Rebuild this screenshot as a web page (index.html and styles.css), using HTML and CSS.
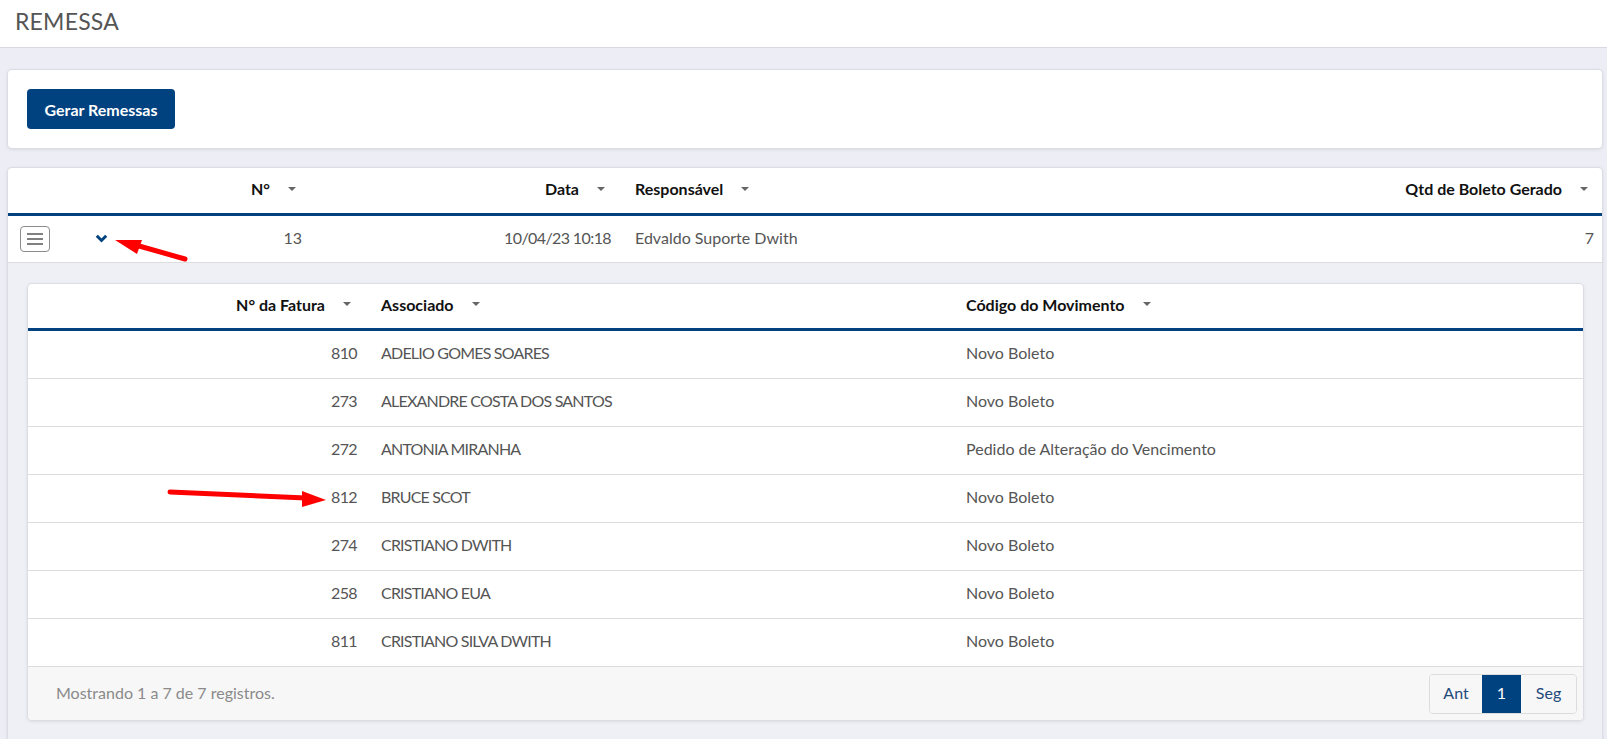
FILE: index.html
```html
<!DOCTYPE html>
<html lang="pt-BR">
<head>
    <meta charset="UTF-8">
    <title>Remessa</title>
    <meta name="viewport" content="width=device-width, initial-scale=1.0">
    <link rel="stylesheet" href="styles.css">
</head>
<body>
    <header class="page-header">
        <h1>REMESSA</h1>
    </header>

    <main class="page-content">
        <!-- Ações -->
        <section class="card actions-card">
            <button class="btn-primary">Gerar Remessas</button>
        </section>

        <!-- Lista de remessas -->
        <section class="card grid-card">
            <div class="grid-row remessa-cols grid-head">
                <div class="th"></div>
                <div class="th"></div>
                <div class="th right"><span>N°</span><i class="sort"></i></div>
                <div class="th right"><span>Data</span><i class="sort"></i></div>
                <div class="th left wide-pad"><span>Responsável</span><i class="sort"></i></div>
                <div class="th right"><span>Qtd de Boleto Gerado</span><i class="sort"></i></div>
            </div>

            <div class="grid-row remessa-cols grid-line">
                <div class="td menu-cell">
                    <span class="menu-btn"><span></span><span></span><span></span></span>
                </div>
                <div class="td expand-cell">
                    <svg class="chevron" width="13" height="9" viewBox="0 0 13 9">
                        <path d="M1.8 1.8 L6.5 6.5 L11.2 1.8" fill="none" stroke="#00417f" stroke-width="3"/>
                    </svg>
                </div>
                <div class="td right">13</div>
                <div class="td right num">10/04/23 10:18</div>
                <div class="td left wide-pad">Edvaldo Suporte Dwith</div>
                <div class="td right">7</div>
            </div>

            <!-- Detalhe expandido -->
            <div class="detail-area">
                <div class="card detail-card">
                    <div class="grid-row fatura-cols grid-head small-head">
                        <div class="th right"><span>N° da Fatura</span><i class="sort"></i></div>
                        <div class="th left wide-pad"><span>Associado</span><i class="sort"></i></div>
                        <div class="th left"><span>Código do Movimento</span><i class="sort"></i></div>
                    </div>

                    <div class="grid-row fatura-cols grid-line tall">
                        <div class="td right num">810</div>
                        <div class="td left wide-pad name">ADELIO GOMES SOARES</div>
                        <div class="td left">Novo Boleto</div>
                    </div>
                    <div class="grid-row fatura-cols grid-line tall">
                        <div class="td right num">273</div>
                        <div class="td left wide-pad name">ALEXANDRE COSTA DOS SANTOS</div>
                        <div class="td left">Novo Boleto</div>
                    </div>
                    <div class="grid-row fatura-cols grid-line tall">
                        <div class="td right num">272</div>
                        <div class="td left wide-pad name">ANTONIA MIRANHA</div>
                        <div class="td left">Pedido de Alteração do Vencimento</div>
                    </div>
                    <div class="grid-row fatura-cols grid-line tall">
                        <div class="td right num">812</div>
                        <div class="td left wide-pad name">BRUCE SCOT</div>
                        <div class="td left">Novo Boleto</div>
                    </div>
                    <div class="grid-row fatura-cols grid-line tall">
                        <div class="td right num">274</div>
                        <div class="td left wide-pad name">CRISTIANO DWITH</div>
                        <div class="td left">Novo Boleto</div>
                    </div>
                    <div class="grid-row fatura-cols grid-line tall">
                        <div class="td right num">258</div>
                        <div class="td left wide-pad name">CRISTIANO EUA</div>
                        <div class="td left">Novo Boleto</div>
                    </div>
                    <div class="grid-row fatura-cols grid-line tall">
                        <div class="td right num">811</div>
                        <div class="td left wide-pad name">CRISTIANO SILVA DWITH</div>
                        <div class="td left">Novo Boleto</div>
                    </div>

                    <div class="grid-footer">
                        <span class="grid-info">Mostrando 1 a 7 de 7 registros.</span>
                        <nav class="pager">
                            <span class="page-item">Ant</span>
                            <span class="page-item active">1</span>
                            <span class="page-item">Seg</span>
                        </nav>
                    </div>
                </div>
            </div>
        </section>
    </main>

    <!-- Setas de anotação -->
    <svg class="annotations" width="1607" height="739" viewBox="0 0 1607 739">
        <line x1="185" y1="259" x2="132" y2="244" stroke="#ff0000" stroke-width="5" stroke-linecap="round"/>
        <polygon points="115,240 142,240 137,254" fill="#ff0000"/>
        <line x1="170" y1="492" x2="306" y2="498" stroke="#ff0000" stroke-width="5" stroke-linecap="round"/>
        <polygon points="326,500 302,491 302,507" fill="#ff0000"/>
    </svg>
</body>
</html>
```

FILE: styles.css
```css
:root {
    --page-bg: #ededf6;
    --primary: #00417f;
    --text-color: #555555;
    --head-color: #111111;
    --line-color: #dddddd;
}

* {
    margin: 0;
    padding: 0;
    box-sizing: border-box;
}

body {
    background-color: var(--page-bg);
    font-family: 'Lato', 'Liberation Sans', sans-serif;
    font-size: 16px;
    color: var(--text-color);
    overflow: hidden;
}

.page-header {
    height: 48px;
    background: #ffffff;
    border-bottom: 1px solid #d9d9e2;
    padding-left: 15px;
    display: flex;
    align-items: center;
}

.page-header h1 {
    font-size: 23px;
    font-weight: 400;
    color: #555555;
    letter-spacing: 0.2px;
    margin-top: -5px;
}

.page-content {
    padding: 22px 5px 0 8px;
    display: flex;
    flex-direction: column;
    gap: 20px;
}

.card {
    background: #ffffff;
    border-radius: 4px;
    box-shadow: 0 0 0 1px #dcdce5, 0 1px 4px rgba(0, 0, 0, 0.12);
}

.actions-card {
    padding: 19px;
}

.btn-primary {
    height: 40px;
    width: 148px;
    background-color: var(--primary);
    color: #ffffff;
    border: none;
    border-radius: 4px;
    font-family: inherit;
    font-size: 16px;
    font-weight: 700;
    cursor: pointer;
}

/* Tabelas */
.grid-card {
    overflow: hidden;
}

.grid-row {
    display: grid;
    align-items: center;
}

.remessa-cols {
    grid-template-columns: 72px 44px 186px 309px 1fr 352px;
}

.fatura-cols {
    grid-template-columns: 337px 593px 1fr;
}

.grid-head {
    height: 48px;
    border-bottom: 3px solid var(--primary);
    color: var(--head-color);
    font-weight: 700;
}

.small-head {
    height: 47px;
}

.grid-line {
    height: 47px;
    border-bottom: 1px solid var(--line-color);
}

.grid-line.tall {
    height: 48px;
}

.th, .td {
    padding: 0 8px 4px;
    white-space: nowrap;
}

.th {
    display: flex;
    align-items: center;
}

.th.right {
    justify-content: flex-end;
}

.td.right {
    text-align: right;
}

.wide-pad {
    padding-left: 16px;
}

.num {
    letter-spacing: -0.6px;
}

.name {
    letter-spacing: -0.8px;
}

.sort {
    width: 0;
    height: 0;
    border-left: 4px solid transparent;
    border-right: 4px solid transparent;
    border-top: 4px solid #666666;
    margin-left: 18px;
    margin-right: 6px;
}

.menu-cell {
    padding: 0 0 0 12px;
}

.menu-btn {
    width: 30px;
    height: 26px;
    border: 1px solid #8c8c8c;
    border-radius: 4px;
    display: flex;
    flex-direction: column;
    justify-content: center;
    align-items: center;
    gap: 3px;
}

.menu-btn span {
    width: 16px;
    height: 2px;
    background: #808080;
}

.expand-cell {
    padding: 0 0 0 15px;
    display: flex;
    margin-top: -2px;
}

/* Detalhe */
.detail-area {
    background: #efeff6;
    padding: 21px 19px 30px 20px;
}

.detail-card {
    overflow: hidden;
}

.grid-footer {
    height: 53px;
    background: #f7f7f7;
    display: flex;
    align-items: center;
    justify-content: space-between;
    padding: 0 6px 0 28px;
}

.grid-info {
    color: #8a8a8a;
    margin-top: -3px;
}

.pager {
    display: flex;
    height: 40px;
    border: 1px solid #dcdcdc;
    border-radius: 4px;
    overflow: hidden;
    margin-top: 1px;
}

.page-item {
    display: flex;
    align-items: center;
    justify-content: center;
    padding: 0 15px 3px;
    color: #1f4a7c;
    background: #f7f7f7;
}

.page-item:first-child {
    width: 52px;
}

.page-item:last-child {
    width: 55px;
}

.page-item.active {
    width: 39px;
    padding: 0 0 3px;
    background: var(--primary);
    color: #ffffff;
}

.annotations {
    position: absolute;
    top: 0;
    left: 0;
    pointer-events: none;
}
```
